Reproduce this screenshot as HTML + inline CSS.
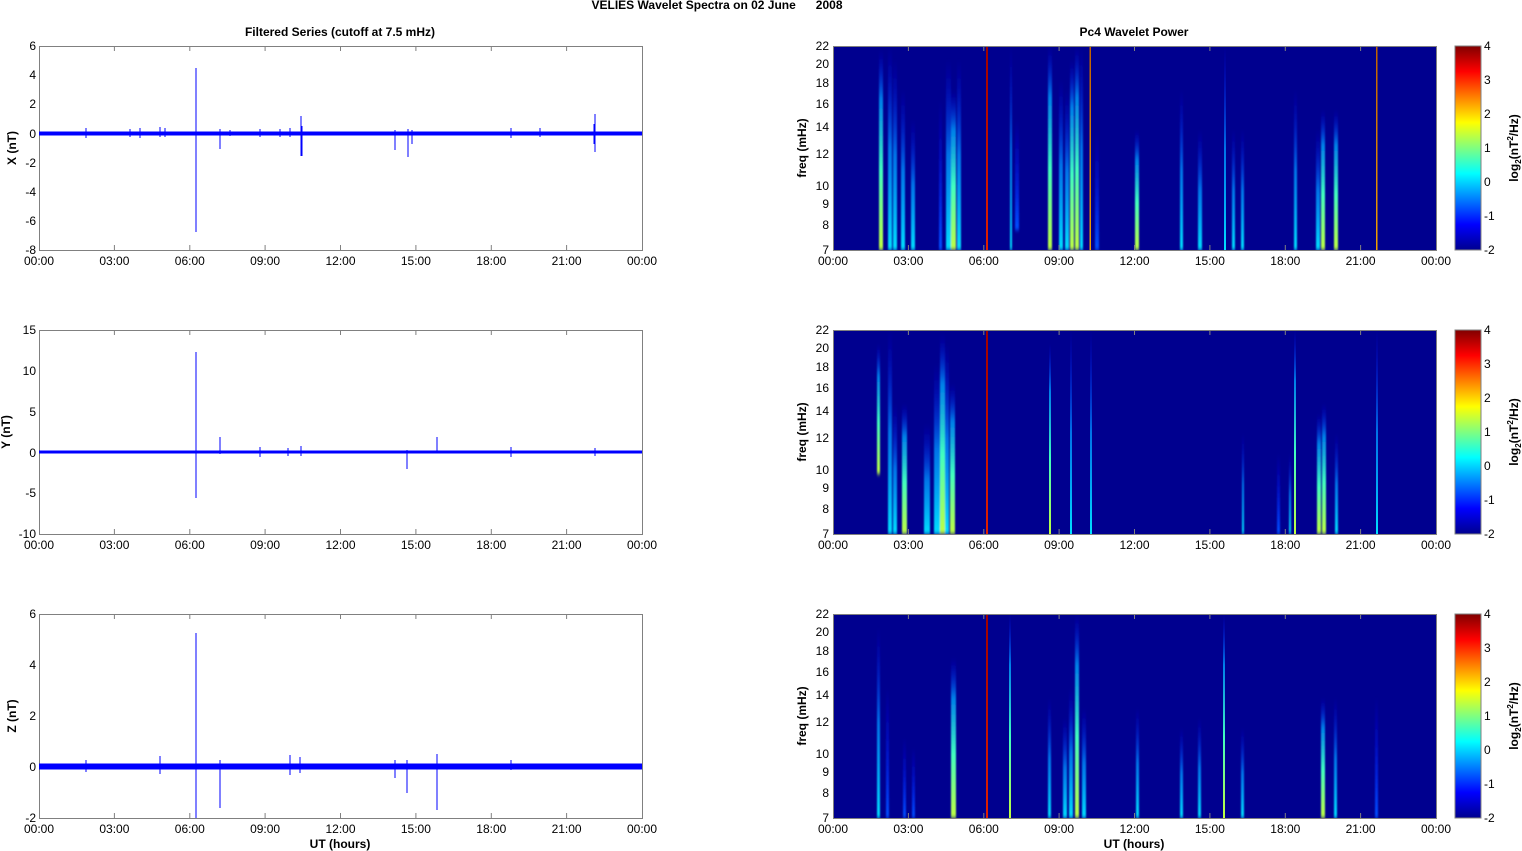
<!DOCTYPE html>
<html><head><meta charset="utf-8"><style>
html,body{margin:0;padding:0;background:#fff;}
svg{display:block;font-family:"Liberation Sans",Arial,sans-serif;}
.t{font-size:12px;fill:#000;}
.b{font-size:12px;font-weight:bold;fill:#000;}
</style></head><body>
<svg width="1522" height="851" viewBox="0 0 1522 851" xmlns="http://www.w3.org/2000/svg">
<defs>
<filter id="bl" x="-0.1" y="0" width="1.2" height="1"><feGaussianBlur stdDeviation="0.9 2"/></filter>
<clipPath id="cp"><rect x="833" y="46" width="603" height="204"/></clipPath>
<linearGradient id="jet" x1="0" y1="1" x2="0" y2="0">
<stop offset="0" stop-color="#00008F"/><stop offset="0.125" stop-color="#0000FF"/><stop offset="0.375" stop-color="#00FFFF"/><stop offset="0.625" stop-color="#FFFF00"/><stop offset="0.875" stop-color="#FF0000"/><stop offset="1" stop-color="#800000"/>
</linearGradient>
<linearGradient id="gc" x1="0" y1="1" x2="0" y2="0"><stop offset="0" stop-color="#00e0ff"/><stop offset="0.5" stop-color="#0090ff" stop-opacity="0.8"/><stop offset="1" stop-color="#0000ff" stop-opacity="0"/></linearGradient>
<linearGradient id="gy" x1="0" y1="1" x2="0" y2="0"><stop offset="0" stop-color="#c0ff40"/><stop offset="0.4" stop-color="#40ffc0"/><stop offset="0.75" stop-color="#00a0ff" stop-opacity="0.8"/><stop offset="1" stop-color="#0000ff" stop-opacity="0"/></linearGradient>
<linearGradient id="gb" x1="0" y1="1" x2="0" y2="0"><stop offset="0" stop-color="#0050ff"/><stop offset="1" stop-color="#0000ff" stop-opacity="0"/></linearGradient>
<linearGradient id="gr" x1="0" y1="1" x2="0" y2="0"><stop offset="0" stop-color="#e02000"/><stop offset="1" stop-color="#a00000"/></linearGradient>
<linearGradient id="go" x1="0" y1="1" x2="0" y2="0"><stop offset="0" stop-color="#f0a000"/><stop offset="1" stop-color="#c06000"/></linearGradient>
<g id="xt">
<g stroke="#808080" stroke-width="1">
<path d="M114.4 46v5M189.8 46v5M265.1 46v5M340.5 46v5M415.9 46v5M491.3 46v5M566.6 46v5M114.4 250v-5M189.8 250v-5M265.1 250v-5M340.5 250v-5M415.9 250v-5M491.3 250v-5M566.6 250v-5"/>
</g>
<g class="t" text-anchor="middle">
<text x="39" y="265">00:00</text><text x="114.4" y="265">03:00</text><text x="189.8" y="265">06:00</text><text x="265.1" y="265">09:00</text><text x="340.5" y="265">12:00</text><text x="415.9" y="265">15:00</text><text x="491.3" y="265">18:00</text><text x="566.6" y="265">21:00</text><text x="642" y="265">00:00</text>
</g>
</g>
<g id="ft" class="t" text-anchor="end">
<text x="829" y="50">22</text><text x="829" y="68">20</text><text x="829" y="87">18</text><text x="829" y="108">16</text><text x="829" y="131">14</text><text x="829" y="158">12</text><text x="829" y="190">10</text><text x="829" y="208">9</text><text x="829" y="229">8</text><text x="829" y="254">7</text>
</g>
<g id="cb">
<rect x="1455" y="46" width="26" height="204" fill="url(#jet)" stroke="#808080"/>
<g class="t"><text x="1484" y="50">4</text><text x="1484" y="84">3</text><text x="1484" y="118">2</text><text x="1484" y="152">1</text><text x="1484" y="186">0</text><text x="1484" y="220">-1</text><text x="1484" y="254">-2</text></g>
<text class="b" transform="translate(1518,148) rotate(-90)" text-anchor="middle">log<tspan font-size="8" dy="3">2</tspan><tspan dy="-3">(nT</tspan><tspan font-size="8" dy="-5">2</tspan><tspan dy="5">/Hz)</tspan></text>
<text class="b" transform="translate(806,148) rotate(-90)" text-anchor="middle">freq (mHz)</text>
</g>
</defs>

<text class="b" x="717" y="9" text-anchor="middle" xml:space="preserve">VELIES Wavelet Spectra on 02 June      2008</text>
<text class="b" x="340" y="36" text-anchor="middle">Filtered Series (cutoff at 7.5 mHz)</text>
<text class="b" x="1134" y="36" text-anchor="middle">Pc4 Wavelet Power</text>

<!-- panel X -->
<rect x="39.5" y="46.5" width="603" height="204" fill="#fff" stroke="#808080"/>
<use href="#xt"/>
<g class="t" text-anchor="end"><text x="36" y="50">6</text><text x="36" y="79">4</text><text x="36" y="108">2</text><text x="36" y="138">0</text><text x="36" y="167">-2</text><text x="36" y="196">-4</text><text x="36" y="225">-6</text><text x="36" y="254">-8</text></g>
<text class="b" transform="translate(16,148) rotate(-90)" text-anchor="middle">X (nT)</text>
<rect x="39" y="131.5" width="603" height="4" fill="#0000ff"/>
<g stroke="#0000ff" stroke-width="1" fill="none">
<path d="M86 128v10M160 127v10M196 68v164M220 129v20M260 129v8M301 116v40M302 126v30M408 129v28M395 130v20M412 130v14M511 128v10M540 128v9M595 114v38M594 124v20"/>
<path d="M130 129v8M140 128v10M165 128v9M280 129v8M290 128v9M230 130v6"/>
</g>

<!-- panel Y -->
<rect x="39.5" y="330.5" width="603" height="204" fill="#fff" stroke="#808080"/>
<use href="#xt" y="284"/>
<g class="t" text-anchor="end"><text x="36" y="334">15</text><text x="36" y="375">10</text><text x="36" y="416">5</text><text x="36" y="457">0</text><text x="36" y="497">-5</text><text x="36" y="538">-10</text></g>
<text class="b" transform="translate(10,432) rotate(-90)" text-anchor="middle">Y (nT)</text>
<rect x="39" y="450.5" width="603" height="3" fill="#0000ff"/>
<g stroke="#0000ff" stroke-width="1" fill="none">
<path d="M196 352v146M220 437v17M260 447v10M288 448v8M301 446v10M407 450v19M437 437v16M511 447v10M595 448v8"/>
</g>

<!-- panel Z -->
<rect x="39.5" y="614.5" width="603" height="204" fill="#fff" stroke="#808080"/>
<use href="#xt" y="568"/>
<g class="t" text-anchor="end"><text x="36" y="618">6</text><text x="36" y="669">4</text><text x="36" y="720">2</text><text x="36" y="771">0</text><text x="36" y="822">-2</text></g>
<text class="b" transform="translate(16,716) rotate(-90)" text-anchor="middle">Z (nT)</text>
<rect x="39" y="763.5" width="603" height="6" fill="#0000ff"/>
<g stroke="#0000ff" stroke-width="1" fill="none">
<path d="M196 633v185M220 760v48M160 756v18M290 755v20M300 757v16M395 760v18M407 760v33M437 754v56M86 760v12M511 760v10"/>
</g>
<text class="b" x="340" y="848" text-anchor="middle">UT (hours)</text>

<!-- RIGHT PANELS -->
<g clip-path="url(#cp)">
<rect x="833" y="46" width="603" height="204" fill="#00008F"/>
<g filter="url(#bl)">
<rect x="879" y="50" width="4" height="200" fill="url(#gy)"/>
<rect x="888" y="46" width="4" height="204" fill="url(#gc)"/>
<rect x="893" y="60" width="4" height="190" fill="url(#gc)"/>
<rect x="901" y="90" width="4" height="160" fill="url(#gc)"/>
<rect x="911" y="120" width="4" height="130" fill="url(#gc)"/>
<rect x="939" y="100" width="3" height="150" fill="url(#gb)"/>
<rect x="946" y="60" width="5" height="190" fill="url(#gc)"/>
<rect x="951" y="90" width="5" height="160" fill="url(#gy)"/>
<rect x="957" y="60" width="4" height="190" fill="url(#gc)"/>
<rect x="1010" y="46" width="2" height="204" fill="url(#gc)"/>
<rect x="1015" y="120" width="4" height="110" fill="url(#gb)"/>
<rect x="1048" y="46" width="4" height="204" fill="url(#gy)"/>
<rect x="1059" y="80" width="4" height="170" fill="url(#gc)"/>
<rect x="1065" y="90" width="4" height="160" fill="url(#gc)"/>
<rect x="1070" y="60" width="4" height="190" fill="url(#gy)"/>
<rect x="1075" y="46" width="4" height="204" fill="url(#gy)"/>
<rect x="1080" y="46" width="3" height="204" fill="url(#gc)"/>
<rect x="1095" y="130" width="4" height="120" fill="url(#gb)"/>
<rect x="1135" y="130" width="4" height="120" fill="url(#gy)"/>
<rect x="1180" y="90" width="3" height="160" fill="url(#gc)"/>
<rect x="1198" y="130" width="4" height="120" fill="url(#gc)"/>
<rect x="1232" y="130" width="3" height="120" fill="url(#gc)"/>
<rect x="1241" y="130" width="3" height="120" fill="url(#gc)"/>
<rect x="1294" y="90" width="3" height="160" fill="url(#gc)"/>
<rect x="1316" y="130" width="4" height="120" fill="url(#gc)"/>
<rect x="1321" y="110" width="4" height="140" fill="url(#gy)"/>
<rect x="1334" y="110" width="4" height="140" fill="url(#gy)"/>
</g>
<rect x="1224" y="46" width="2" height="204" fill="url(#gc)"/>
<rect x="986" y="46" width="2" height="204" fill="url(#gr)"/>
<rect x="1089.5" y="46" width="1.5" height="204" fill="url(#go)"/>
<rect x="1376" y="46" width="1.5" height="204" fill="url(#go)"/>
</g>
<g transform="translate(0,284)"><g clip-path="url(#cp)">
<rect x="833" y="46" width="603" height="204" fill="#00008F"/>
<g filter="url(#bl)">
<rect x="877" y="60" width="3" height="130" fill="url(#gy)"/>
<rect x="888" y="46" width="4" height="204" fill="url(#gc)"/>
<rect x="893" y="120" width="4" height="130" fill="url(#gc)"/>
<rect x="902" y="120" width="5" height="130" fill="url(#gy)"/>
<rect x="924" y="140" width="6" height="110" fill="url(#gc)"/>
<rect x="934" y="80" width="6" height="170" fill="url(#gc)"/>
<rect x="940" y="50" width="5" height="200" fill="url(#gy)"/>
<rect x="945" y="60" width="4" height="190" fill="url(#gc)"/>
<rect x="950" y="100" width="5" height="150" fill="url(#gy)"/>
<rect x="1242" y="150" width="2" height="100" fill="url(#gc)"/>
<rect x="1277" y="170" width="3" height="80" fill="url(#gb)"/>
<rect x="1289" y="170" width="2" height="80" fill="url(#gc)"/>
<rect x="1317" y="130" width="4" height="120" fill="url(#gy)"/>
<rect x="1322" y="120" width="4" height="130" fill="url(#gy)"/>
<rect x="1335" y="150" width="3" height="100" fill="url(#gc)"/>
</g>
<rect x="1049" y="60" width="2" height="190" fill="url(#gy)"/>
<rect x="1070" y="46" width="2" height="204" fill="url(#gc)"/>
<rect x="1090" y="46" width="2" height="204" fill="url(#gc)"/>
<rect x="1294" y="46" width="2" height="204" fill="url(#gy)"/>
<rect x="1376" y="46" width="2" height="204" fill="url(#gc)"/>
<rect x="986" y="46" width="2" height="204" fill="url(#gr)"/>
</g></g>
<g transform="translate(0,568)"><g clip-path="url(#cp)">
<rect x="833" y="46" width="603" height="204" fill="#00008F"/>
<g filter="url(#bl)">
<rect x="877" y="60" width="3" height="190" fill="url(#gc)"/>
<rect x="886" y="120" width="3" height="130" fill="url(#gb)"/>
<rect x="903" y="170" width="3" height="80" fill="url(#gb)"/>
<rect x="912" y="180" width="3" height="70" fill="url(#gb)"/>
<rect x="951" y="90" width="5" height="160" fill="url(#gy)"/>
<rect x="1048" y="130" width="3" height="120" fill="url(#gc)"/>
<rect x="1063" y="150" width="4" height="100" fill="url(#gc)"/>
<rect x="1069" y="120" width="4" height="130" fill="url(#gc)"/>
<rect x="1075" y="46" width="4" height="204" fill="url(#gy)"/>
<rect x="1082" y="140" width="4" height="110" fill="url(#gc)"/>
<rect x="1136" y="140" width="3" height="110" fill="url(#gc)"/>
<rect x="1180" y="160" width="3" height="90" fill="url(#gc)"/>
<rect x="1198" y="150" width="3" height="100" fill="url(#gc)"/>
<rect x="1241" y="160" width="3" height="90" fill="url(#gc)"/>
<rect x="1321" y="130" width="4" height="120" fill="url(#gy)"/>
<rect x="1334" y="130" width="3" height="120" fill="url(#gc)"/>
<rect x="1375" y="130" width="3" height="120" fill="url(#gb)"/>
</g>
<rect x="1009" y="46" width="2" height="204" fill="url(#gy)"/>
<rect x="1223" y="46" width="2" height="204" fill="url(#gy)"/>
<rect x="986" y="46" width="2" height="204" fill="url(#gr)"/>
</g></g>

<g>
<rect x="833.5" y="46.5" width="603" height="204" fill="none" stroke="#808080"/>
<use href="#xt" x="794"/>
<use href="#ft"/>
<use href="#cb"/>
</g>
<g transform="translate(0,284)">
<rect x="833.5" y="46.5" width="603" height="204" fill="none" stroke="#808080"/>
<use href="#xt" x="794"/>
<use href="#ft"/>
<use href="#cb"/>
</g>
<g transform="translate(0,568)">
<rect x="833.5" y="46.5" width="603" height="204" fill="none" stroke="#808080"/>
<use href="#xt" x="794"/>
<use href="#ft"/>
<use href="#cb"/>
</g>
<text class="b" x="1134" y="848" text-anchor="middle">UT (hours)</text>
</svg>
</body></html>
